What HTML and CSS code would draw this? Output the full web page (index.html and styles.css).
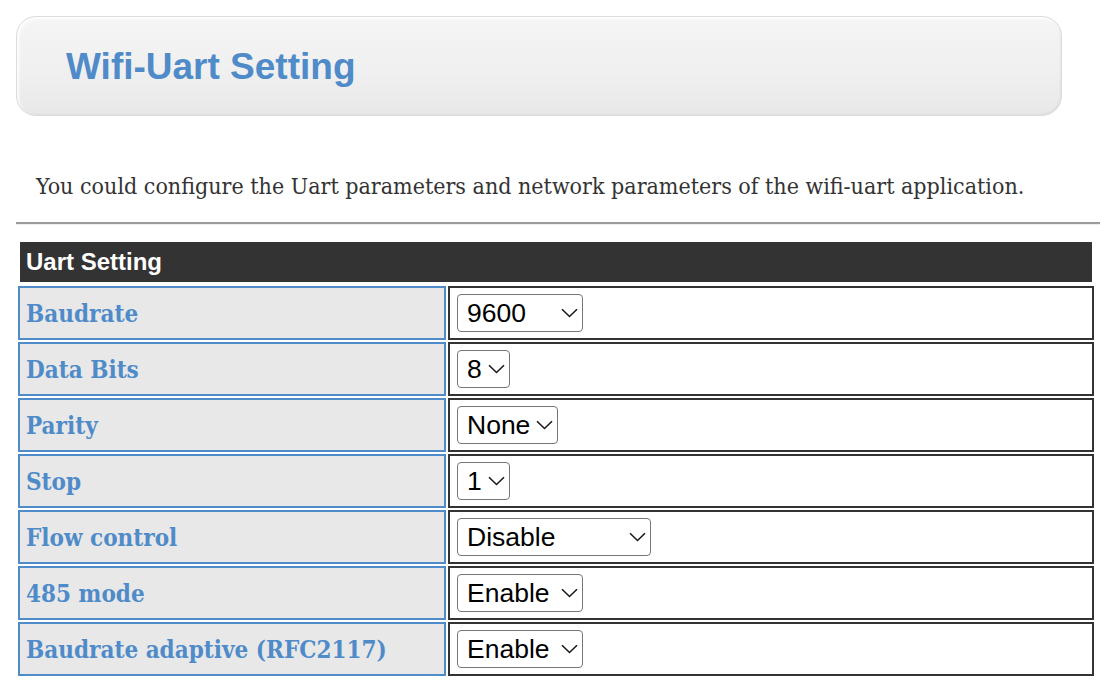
FILE: index.html
```html
<!DOCTYPE html>
<html>
<head>
<meta charset="utf-8">
<title>Wifi-Uart Setting</title>
<link rel="stylesheet" href="styles.css">
</head>
<body>
<div class="page">
  <div class="banner"><h1 class="banner-title">Wifi-Uart Setting</h1></div>
  <p class="intro">You could configure the Uart parameters and network parameters of the wifi-uart application.</p>
  <hr class="divider">
  <table class="settings">
    <tr><th class="section" colspan="2">Uart Setting</th></tr>
    <tr>
      <td class="label">Baudrate</td>
      <td class="value"><span class="selwrap"><select class="sel sel-baud"><option>9600</option><option>115200</option></select><svg class="chev" width="17" height="10" viewBox="0 0 17 10"><path d="M1 1.2 L8.5 8.5 L16 1.2" fill="none" stroke="#1a1a1a" stroke-width="1.6"/></svg></span></td>
    </tr>
    <tr>
      <td class="label">Data Bits</td>
      <td class="value"><span class="selwrap"><select class="sel sel-small"><option>8</option><option>7</option></select><svg class="chev" width="17" height="10" viewBox="0 0 17 10"><path d="M1 1.2 L8.5 8.5 L16 1.2" fill="none" stroke="#1a1a1a" stroke-width="1.6"/></svg></span></td>
    </tr>
    <tr>
      <td class="label">Parity</td>
      <td class="value"><span class="selwrap"><select class="sel sel-parity"><option>None</option><option>Odd</option><option>Even</option></select><svg class="chev" width="17" height="10" viewBox="0 0 17 10"><path d="M1 1.2 L8.5 8.5 L16 1.2" fill="none" stroke="#1a1a1a" stroke-width="1.6"/></svg></span></td>
    </tr>
    <tr>
      <td class="label">Stop</td>
      <td class="value"><span class="selwrap"><select class="sel sel-small"><option>1</option><option>2</option></select><svg class="chev" width="17" height="10" viewBox="0 0 17 10"><path d="M1 1.2 L8.5 8.5 L16 1.2" fill="none" stroke="#1a1a1a" stroke-width="1.6"/></svg></span></td>
    </tr>
    <tr>
      <td class="label">Flow control</td>
      <td class="value"><span class="selwrap"><select class="sel sel-flow"><option>Disable</option><option>Enable</option></select><svg class="chev" width="17" height="10" viewBox="0 0 17 10"><path d="M1 1.2 L8.5 8.5 L16 1.2" fill="none" stroke="#1a1a1a" stroke-width="1.6"/></svg></span></td>
    </tr>
    <tr>
      <td class="label">485 mode</td>
      <td class="value"><span class="selwrap"><select class="sel sel-enable"><option>Enable</option><option>Disable</option></select><svg class="chev" width="17" height="10" viewBox="0 0 17 10"><path d="M1 1.2 L8.5 8.5 L16 1.2" fill="none" stroke="#1a1a1a" stroke-width="1.6"/></svg></span></td>
    </tr>
    <tr>
      <td class="label">Baudrate adaptive (RFC2117)</td>
      <td class="value"><span class="selwrap"><select class="sel sel-enable"><option>Enable</option><option>Disable</option></select><svg class="chev" width="17" height="10" viewBox="0 0 17 10"><path d="M1 1.2 L8.5 8.5 L16 1.2" fill="none" stroke="#1a1a1a" stroke-width="1.6"/></svg></span></td>
    </tr>
  </table>
</div>
</body>
</html>
```

FILE: styles.css
```css
html, body {
  margin: 0;
  padding: 0;
  background: #ffffff;
}

.page {
  padding: 16px 16px 0 16px;
}

.banner {
  width: 1046px;
  height: 100px;
  box-sizing: border-box;
  border: 1px solid #dcdcdc;
  border-radius: 20px;
  background: linear-gradient(to bottom, #f5f5f5 0%, #efefef 60%, #e8e8e8 100%);
  box-shadow: inset 2px 2px 3px rgba(255,255,255,0.9), inset -1px -1px 2px rgba(0,0,0,0.05);
  display: flex;
  align-items: center;
  padding-left: 49px;
}

.banner-title {
  margin: 0;
  font-family: "Liberation Sans", Arial, sans-serif;
  font-weight: bold;
  font-size: 37px;
  color: #4f8bc9;
  position: relative;
  top: 1px;
}

.intro {
  margin: 54px 0 0 20px;
  font-family: "DejaVu Serif Condensed", "DejaVu Serif", Georgia, serif;
  font-stretch: semi-condensed;
  font-size: 23px;
  line-height: 32px;
  color: #333333;
}

.divider {
  margin: 20px 0 0 0;
  height: 0;
  border: 0;
  border-top: 2px solid #9b9b9b;
  border-bottom: 1px solid #eeeeee;
}

.settings {
  margin-top: 13px;
  width: 1080px;
  border-collapse: separate;
  border-spacing: 2px;
  font-family: "DejaVu Serif Condensed", "DejaVu Serif", Georgia, serif;
  font-stretch: semi-condensed;
}

.section {
  background: #333333;
  border: 2px solid #ffffff;
  color: #ffffff;
  text-align: left;
  font-family: "Liberation Sans", Arial, sans-serif;
  font-stretch: normal;
  font-weight: bold;
  font-size: 24px;
  height: 40px;
  box-sizing: content-box;
  padding: 0 0 0 6px;
  line-height: 40px;
}

.label {
  width: 418px;
  height: 50px;
  box-sizing: content-box;
  border: 2px solid #4f8bc9;
  background: #e8e8e8;
  padding: 0 0 0 6px;
  color: #4f8bc9;
  font-weight: bold;
  font-size: 24px;
}

.value {
  height: 50px;
  border: 2px solid #333333;
  padding: 0 0 0 7px;
  background: #ffffff;
}

.selwrap {
  position: relative;
  display: inline-block;
  vertical-align: middle;
  margin-top: -1px;
}

.sel {
  -webkit-appearance: none;
  appearance: none;
  display: block;
  box-sizing: border-box;
  font-family: "Liberation Sans", Arial, sans-serif;
  font-size: 26.5px;
  height: 38px;
  color: #000000;
  background: #ffffff;
  border: 1px solid #767676;
  border-radius: 4px;
  padding: 0 0 0 9px;
  margin: 0;
}

.chev {
  position: absolute;
  right: 5px;
  top: 14px;
  pointer-events: none;
}

.sel-baud { width: 126px; }
.sel-small { width: 53px; }
.sel-parity { width: 101px; }
.sel-flow { width: 194px; }
.sel-enable { width: 126px; }
```
